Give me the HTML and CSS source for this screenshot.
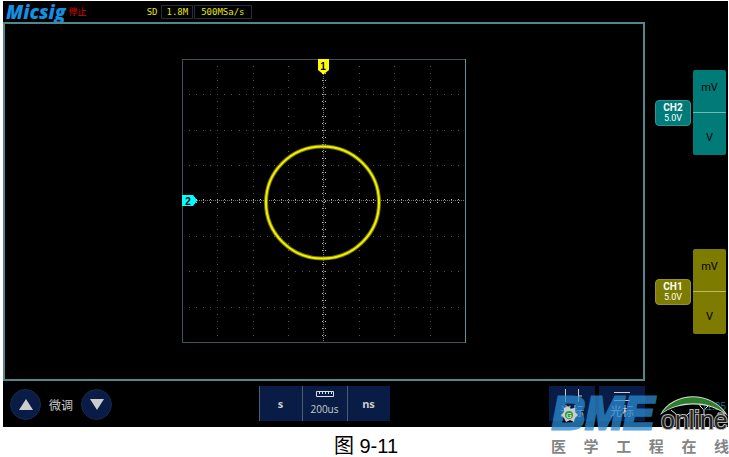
FILE: index.html
```html
<!DOCTYPE html>
<html lang="zh-CN">
<head>
<meta charset="utf-8">
<title>图 9-11</title>
<link rel="stylesheet" href="styles.css">
</head>
<body>
<figure class="figure">
  <div class="device">
    <header class="status">
      <span class="brand">Micsig</span>
      <span class="state">停止</span>
      <span class="storage">SD</span>
      <span class="readout">1.8M</span>
      <span class="readout rate">500MSa/s</span>
    </header>

    <main class="scope">
      <section class="screen">
        <svg class="plot" viewBox="0 0 284 284" role="img" aria-label="XY">
          <g class="dots">
            <path d="M35.5 7V280M71.5 7V280M106.5 7V280M177.5 7V280M212.5 7V280M248.5 7V280"/>
            <path d="M7 35.5H280M7 71.5H280M7 106.5H280M7 177.5H280M7 212.5H280M7 248.5H280"/>
          </g>
          <path class="axis" d="M141.5 1V283M1 141.5H283"/>
          <path class="ticks" d="M140.5 7V280M143.5 7V280M7 140.5H280M7 143.5H280"/>
          <ellipse class="glow" cx="140.5" cy="143.5" rx="56.5" ry="56"/>
          <ellipse class="trace" cx="140.5" cy="143.5" rx="56.5" ry="56"/>
          <path class="edge" d="M.5 283.5V.5H283.5"/>
          <path class="edge" d="M.5 283.5H283.5"/>
          <path class="edge bright" d="M283.5 0V284"/>
          <path fill="#ff0" d="M136 0H147V11L142 15H141L136 11Z"/>
          <text class="mark" x="141" y="11">1</text>
          <path fill="#0ff" d="M0 136H11L15 141V142L11 147H0Z"/>
          <text class="mark" x="6" y="146">2</text>
        </svg>
      </section>

      <aside class="channels">
        <div class="channel ch2">
          <button class="tag" type="button"><b>CH2</b><span>5.0V</span></button>
          <div class="scale">
            <button type="button">mV</button>
            <button type="button">V</button>
          </div>
        </div>
        <div class="channel ch1">
          <button class="tag" type="button"><b>CH1</b><span>5.0V</span></button>
          <div class="scale">
            <button type="button">mV</button>
            <button type="button">V</button>
          </div>
        </div>
      </aside>
    </main>

    <footer class="controls">
      <div class="bar">
        <div class="fine">
          <button class="round" type="button" aria-label="增加"><svg viewBox="0 0 14 11"><path d="M7 0L14 11H0Z"/></svg></button>
          <span>微调</span>
          <button class="round" type="button" aria-label="减少"><svg viewBox="0 0 14 11"><path d="M0 0H14L7 11Z"/></svg></button>
        </div>
        <div class="timebase">
          <button type="button"><b>s</b></button>
          <button type="button">
            <svg class="ruler" viewBox="0 0 18 6"><path d="M.5 .5H17.5V5.5H.5ZM3.5 1V3M6.5 1V3M9.5 1V3M12.5 1V3M15.5 1V3"/></svg>
            <span>200us</span>
          </button>
          <button type="button"><b>ns</b></button>
        </div>
        <div class="cursors">
          <button type="button"><svg viewBox="0 0 20 16"><path d="M3.5 0V13M16.5 0V13M17 7H20"/></svg><span>光标</span></button>
          <button type="button"><svg viewBox="0 0 20 16"><path d="M2 3.5H18M2 11.5H18"/></svg><span>光标</span></button>
        </div>
      </div>
      <div class="tray">
        <svg viewBox="0 0 60 26">
          <path d="M3 11L14 20L25 11M36 22V11M32 3V7L36 11L40 7V3M50 14H56V21H50Z"/>
        </svg>
        <time>11:25</time>
      </div>
    </footer>

    <div class="watermark">
      <svg viewBox="0 0 180 44">
        <text class="bme" x="3" y="36">BME</text>
        <path class="hub" d="M19 13L22 16L26 15L26 19L29 22L26 25L25 29L21 27L17 29L15 25L12 22L15 19L15 15Z"/>
        <circle class="hub-core" cx="20" cy="22" r="4"/>
        <text class="hub-letter" x="20" y="25">G</text>
        <path class="swoosh-edge" d="M111 22C124 -3 164 -3 179 23C160 8 130 8 111 22Z"/>
        <path class="swoosh" d="M113 20C127 -1 161 -1 176 20C158 7 131 7 113 20Z"/>
        <text class="online" x="112" y="36">online</text>
      </svg>
      <p><span>医</span><span>学</span><span>工</span><span>程</span><span>在</span><span>线</span></p>
    </div>
  </div>
  <figcaption>图 9-11</figcaption>
</figure>
</body>
</html>
```

FILE: styles.css
```css
* { box-sizing: border-box; }

body {
  margin: 0;
  background: #fff;
  font-family: "Liberation Sans", "Noto Sans CJK SC", sans-serif;
}

button {
  margin: 0;
  padding: 0;
  border: 0;
  background: none;
  color: inherit;
  font: inherit;
}

svg { display: block; }

.figure { margin: 0; }

.device {
  position: relative;
  margin: 1px 1px 0 3px;
  background: #000;
}

/* Status line */
.status {
  display: flex;
  align-items: center;
  height: 21px;
  padding: 0 3px;
}

.brand {
  color: #1590e0;
  font-family: "Open Sans", sans-serif;
  font-size: 19px;
  font-weight: 800;
  font-style: italic;
  line-height: 20px;
}

.state {
  margin-left: 3px;
  color: #e00000;
  font-size: 9px;
}

.storage,
.readout {
  color: #e6e600;
  font-family: "DejaVu Sans Mono", monospace;
  font-size: 9px;
  line-height: 12px;
}

.storage { margin: 0 4px 0 60px; }

.readout {
  padding: 0 4px;
  border: 1px solid #22303c;
}

.rate {
  margin-left: 1px;
  padding: 0 6px;
}

/* Scope */
.scope { display: flex; }

.screen {
  display: flex;
  flex: 1;
  justify-content: center;
  padding: 35px 0 36px;
  border: 2px solid #4f898c;
}

.plot {
  width: 284px;
  height: 284px;
  fill: none;
}

.dots,
.axis,
.ticks,
.edge { shape-rendering: crispEdges; }

.dots {
  stroke: #555;
  stroke-dasharray: 1 6.08;
}

.axis {
  stroke: #777;
  stroke-dasharray: 1 1;
}

.ticks {
  stroke: #bbb;
  stroke-dasharray: 1 6.08;
}

.edge { stroke: #3b5559; }
.edge.bright { stroke: #659496; }

.glow {
  stroke: #777700;
  stroke-width: 4;
}

.trace {
  stroke: #f0f000;
  stroke-width: 2;
}

.mark {
  fill: #000;
  font-size: 10px;
  font-weight: bold;
  text-anchor: middle;
}

/* Channels */
.channels {
  display: flex;
  flex-direction: column;
  gap: 94px;
  width: 83px;
  padding: 48px 2px 0 10px;
}

.channel {
  display: flex;
  align-items: center;
  gap: 2px;
}

.ch2 { --tint: #007b78; --line: #70bab7; --rim: #2f9390; }
.ch1 { --tint: #7d7b00; --line: #bcba70; --rim: #959330; }

.tag {
  display: flex;
  flex-direction: column;
  align-items: center;
  justify-content: center;
  width: 36px;
  height: 26px;
  border: 1px solid var(--rim);
  border-radius: 4px;
  background: var(--tint);
  color: #fff;
  font-family: Roboto, sans-serif;
  font-size: 9px;
  line-height: 10px;
}

.tag b { font-size: 10px; }

.scale {
  width: 33px;
  border-radius: 2px;
  background: var(--tint);
}

.scale button {
  display: block;
  width: 100%;
  height: 42px;
  padding-top: 8px;
  color: #000;
  font-family: Roboto, sans-serif;
  font-size: 11px;
  line-height: 20px;
}

.scale button:first-child {
  height: 43px;
  border-bottom: 1px solid var(--line);
  padding: 0 0 6px;
}

/* Bottom controls */
.controls {
  display: flex;
  height: 46px;
}

.bar {
  display: grid;
  flex: 1;
  grid-template-columns: 1fr auto 1fr;
  align-items: start;
  padding-top: 5px;
}

.fine {
  display: flex;
  align-items: center;
  gap: 8px;
  padding: 3px 0 0 7px;
  color: #ccc;
  font-size: 12px;
}

.round {
  display: flex;
  align-items: center;
  justify-content: center;
  width: 31px;
  height: 31px;
  border: 1px solid #16294d;
  border-radius: 50%;
  background: #081c45;
}

.round svg {
  width: 14px;
  height: 11px;
  fill: #ccc;
}

.timebase {
  display: flex;
  color: #ccc;
  font-family: "Open Sans", sans-serif;
  font-size: 10px;
}

.timebase b { font-size: 11px; }

.timebase button {
  display: flex;
  flex-direction: column;
  align-items: center;
  justify-content: center;
  gap: 5px;
  width: 43px;
  height: 35px;
  border-left: 1px solid #4d5b76;
  background: #081c45;
  line-height: 14px;
}

.timebase button:nth-child(2) { width: 45px; }

.ruler {
  width: 18px;
  height: 6px;
  fill: none;
  stroke: #ddd;
}

.cursors {
  display: flex;
  justify-content: flex-end;
  gap: 4px;
  color: #c8d0dc;
  font-size: 12px;
}

.cursors button {
  display: flex;
  flex-direction: column;
  align-items: center;
  width: 46px;
  height: 35px;
  padding-top: 3px;
  background: #081c45;
  line-height: 14px;
}

.cursors svg {
  width: 20px;
  height: 16px;
  fill: none;
  stroke: #ccc;
}

.tray {
  position: relative;
  width: 83px;
  padding: 18px 0 0 23px;
}

.tray svg {
  width: 60px;
  height: 26px;
  fill: none;
  stroke: #ddd;
  stroke-width: 1;
}

.tray time {
  position: absolute;
  top: 20px;
  right: 2px;
  color: #236e78;
  font-size: 10px;
}

/* Site mark laid over the lower right corner */
.watermark {
  position: absolute;
  right: -1px;
  bottom: -30px;
  width: 180px;
}

.bme {
  fill: #2a8ad0;
  stroke: #2a8ad0;
  stroke-width: 3;
  opacity: .75;
  font-size: 46px;
  font-weight: bold;
  font-style: italic;
}

.hub { fill: #c8cec8; }
.hub-core { fill: #3a963f; }

.hub-letter {
  fill: #fff;
  font-size: 7px;
  text-anchor: middle;
}

.swoosh-edge { fill: #d5ddd5; }
.swoosh { fill: #2c7d2c; }

.online {
  fill: #222;
  stroke: #b4b4b4;
  stroke-width: 2;
  paint-order: stroke;
  font-size: 25px;
}

.watermark p {
  display: flex;
  justify-content: space-between;
  margin: 0;
  padding: 0 0 0 2px;
  color: #858585;
  font-size: 15px;
  font-weight: bold;
  line-height: 20px;
}

figcaption {
  padding: 9px 0 0 3px;
  text-align: center;
  color: #000;
  font-size: 20px;
  line-height: 21px;
}
```
